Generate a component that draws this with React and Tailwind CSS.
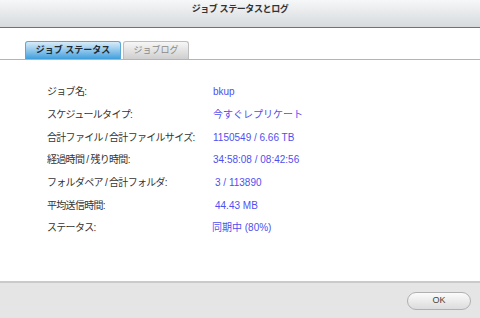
import React from 'react';

const rows = [
  { label: 'ジョブ名:', value: 'bkup', pad: 'pl-0' },
  { label: 'スケジュールタイプ:', value: '今すぐレプリケート', pad: 'pl-0' },
  { label: '合計ファイル / 合計ファイルサイズ:', value: '1150549 / 6.66 TB', pad: 'pl-0' },
  { label: '経過時間 / 残り時間:', value: '34:58:08 / 08:42:56', pad: 'pl-0' },
  { label: 'フォルダペア / 合計フォルダ:', value: '3 / 113890', pad: 'pl-[2px]' },
  { label: '平均送信時間:', value: '44.43 MB', pad: 'pl-[2px]' },
  { label: 'ステータス:', value: '同期中 (80%)', pad: '-ml-[1px]' },
];

const JobStatus = () => {
  return (
    <div
      className="w-[480px] h-[318px] flex flex-col bg-white overflow-hidden"
      style={{ fontFamily: '"Liberation Sans", "Noto Sans CJK JP", sans-serif' }}
    >
      {/* title bar */}
      <div className="h-[28px] shrink-0 flex items-start justify-center pt-[3px] bg-gradient-to-b from-[#f6f7f8] to-[#d6dadd] border-b border-[#6e7377]">
        <span className="text-[9px] font-bold text-[#333] tracking-[-0.4px]">ジョブ ステータスとログ</span>
      </div>

      {/* tabs */}
      <div className="pt-[13px] px-[25px] flex gap-[2px] border-b border-[#b4b4b4] shrink-0">
        <div className="w-[96px] h-[18px] flex items-center justify-center rounded-t-[3px] border border-b-0 border-[#5aa8d8] bg-gradient-to-b from-[#d8ecf9] to-[#3b9fdc] text-[9px] font-bold text-[#1f2a33]">
          ジョブ ステータス
        </div>
        <div className="w-[66px] h-[18px] flex items-center justify-center rounded-t-[3px] border border-b-0 border-[#bdbdbd] bg-gradient-to-b from-[#f7f7f7] to-[#cfcfcf] text-[9px] font-normal text-[#8a8a8a]">
          ジョブログ
        </div>
      </div>

      {/* content */}
      <div className="flex-1 pt-[21px] pl-[47px]">
        <div className="flex flex-col">
          {rows.map((r) => (
            <div key={r.label} className="flex items-center h-[22.67px] text-[10px] leading-none whitespace-nowrap">
              <div className="w-[166px] text-[#333] tracking-[-0.7px]">{r.label}</div>
              <div className={`text-[#4f4ff0] ${r.pad}`}>{r.value}</div>
            </div>
          ))}
        </div>
      </div>

      {/* footer */}
      <div className="h-[37px] shrink-0 bg-[#e5e5e5] border-t-2 border-[#cacaca] flex items-center justify-end pr-[9px]">
        <button className="w-[64px] h-[18px] rounded-full border border-[#b0b0b0] bg-gradient-to-b from-[#fbfbfb] to-[#dcdcdc] text-[9px] text-[#444] flex items-center justify-center">
          OK
        </button>
      </div>
    </div>
  );
};

export default function App() {
  return <JobStatus />;
}
